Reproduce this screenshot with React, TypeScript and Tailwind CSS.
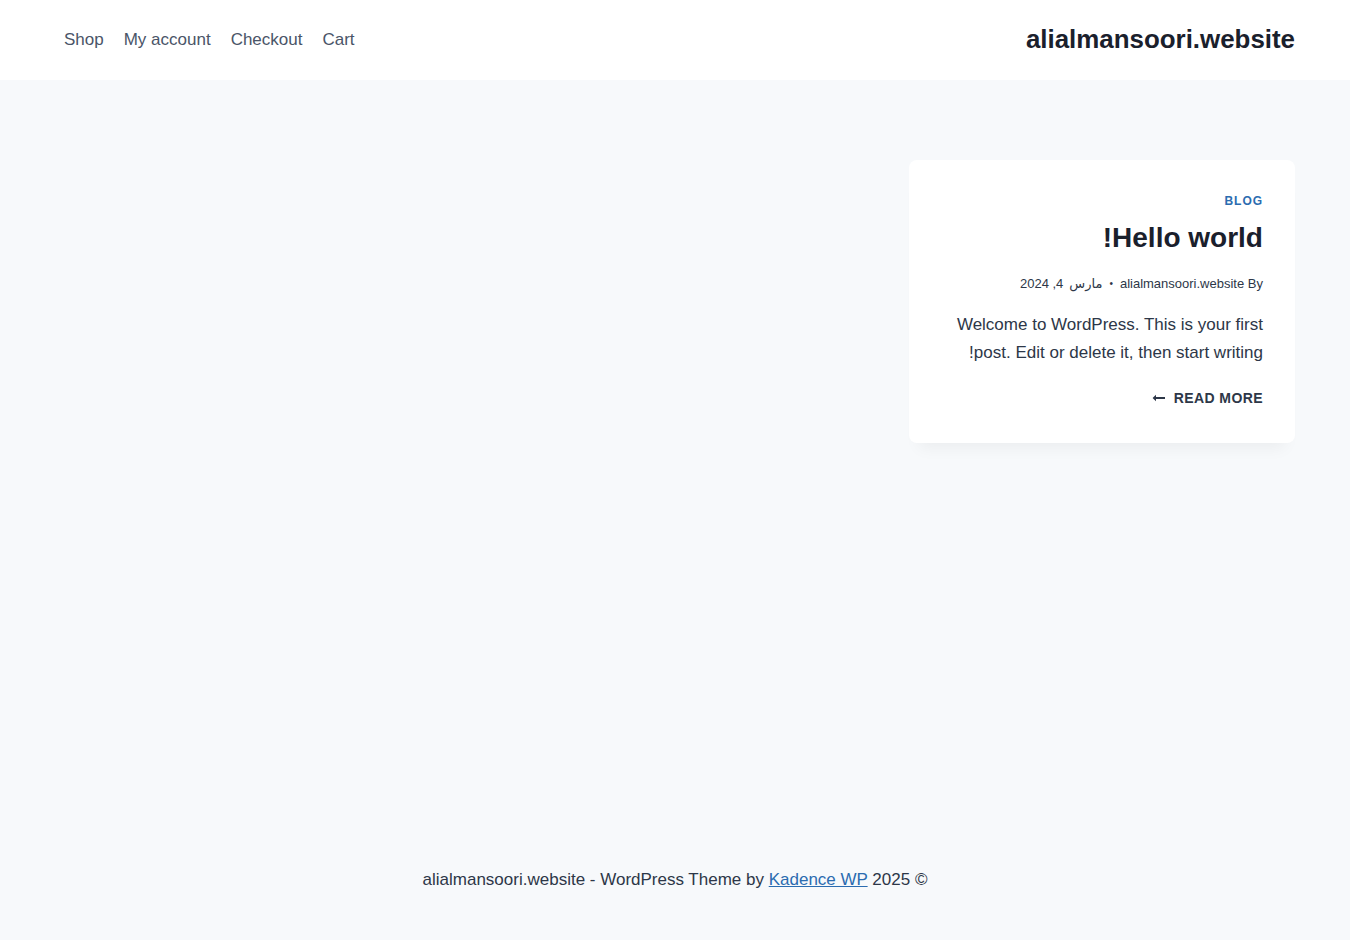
import React from "react";

export default function App() {
  const font = { fontFamily: '"Liberation Sans", Arial, "Noto Sans", sans-serif' };
  return (
    <div className="min-h-screen flex flex-col bg-[#f7f9fb] text-[#4a5568]" style={font}>
      <header className="h-[80px] bg-white flex items-center justify-between px-[55px] shrink-0">
        <nav className="flex items-center text-[17px] text-[#4a5568] -mt-[2px]">
          {["Shop", "My account", "Checkout", "Cart"].map((t) => (
            <a key={t} className="px-[10px] leading-[27px] first:pl-[9px]">{t}</a>
          ))}
        </nav>
        <div className="text-[25.9px] font-bold text-[#1a202c] leading-none">alialmansoori.website</div>
      </header>

      <main className="h-[755px] px-[55px] pt-[80px] shrink-0">
        <div className="grid grid-cols-3 gap-10">
          <article className="col-start-3 ml-[1px] bg-white rounded-lg shadow-[0_15px_15px_-10px_rgba(0,0,0,0.05)] p-8 pb-[35px] flex flex-col items-end text-right">
            <div className="text-[12px] leading-[18px] font-bold tracking-[0.08em] text-[#2b6cb0] uppercase">Blog</div>
            <h2 className="mt-[7px] text-[28px] leading-[42px] font-bold text-[#1a202c]">!Hello world</h2>
            <div className="mt-[14px] text-[13px] leading-[21px] text-[#2d3748] flex items-center">
              <span>2024 ,4 </span>
              <span className="ml-[6px] text-[13px]" style={{ fontFamily: '"DejaVu Sans", "Noto Sans", sans-serif' }}>مارس</span>
              <span className="mx-[7px] text-[10px]">•</span>
              <span>alialmansoori.website By</span>
            </div>
            <p className="mt-[17px] text-[17px] leading-[28px] text-[#2d3748]">
              Welcome to WordPress. This is your first
              <br />
              !post. Edit or delete it, then start writing
            </p>
            <div className="mt-[21px] flex items-center text-[14px] leading-[20px] font-bold tracking-[0.03em] text-[#2d3748] uppercase">
              <svg width="14" height="8" viewBox="0 0 14 8" className="mr-[8px]">
                <path d="M13 4H2" stroke="#2d3748" strokeWidth="2" />
                <path d="M4 0.8L0.6 4L4 7.2Z" fill="#2d3748" />
              </svg>
              Read more
            </div>
          </article>
        </div>
      </main>

      <footer className="pt-[31px] pb-[47px] text-center text-[17px] leading-[27px] text-[#2d3748]">
        alialmansoori.website - WordPress Theme by{" "}
        <a className="text-[#2b6cb0] underline">Kadence WP</a> 2025 ©
      </footer>
    </div>
  );
}
